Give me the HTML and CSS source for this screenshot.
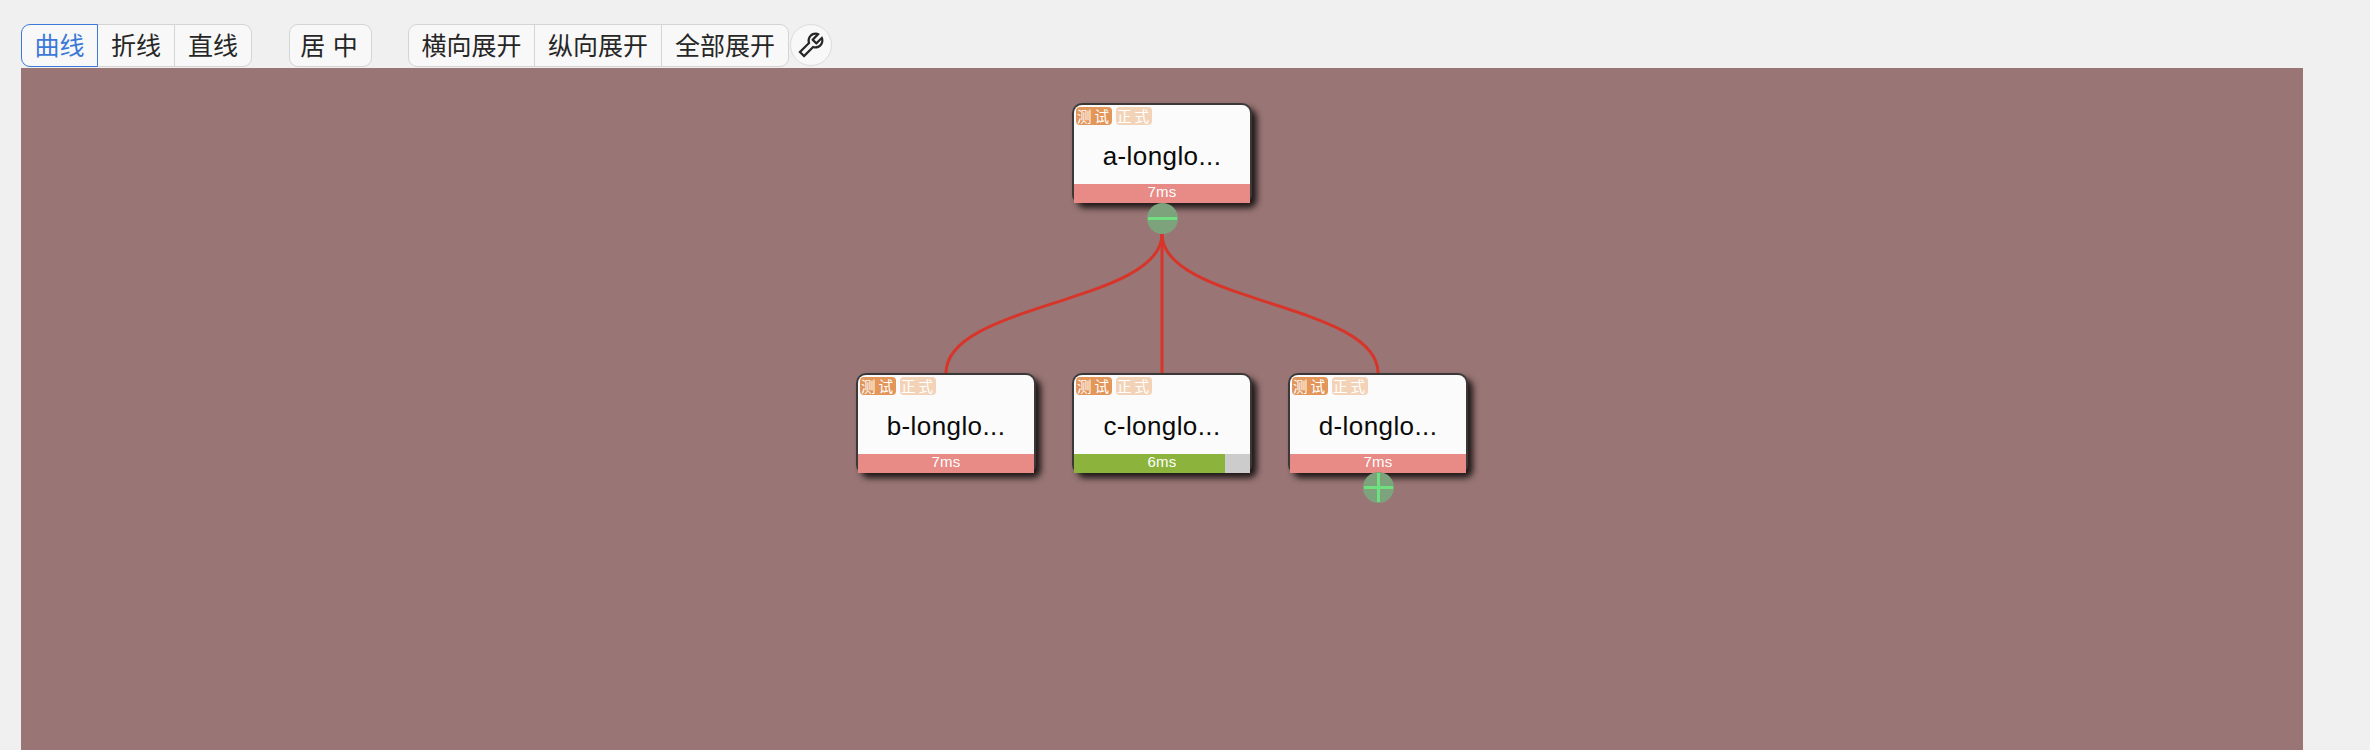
FILE: index.html
```html
<!DOCTYPE html>
<html lang="zh-CN">
<head>
<meta charset="utf-8">
<title>链路图</title>
<link rel="stylesheet" href="styles.css">
</head>
<body>
<div class="toolbar">
  <div class="group">
    <button class="btn selected">曲线</button>
    <button class="btn">折线</button>
    <button class="btn">直线</button>
  </div>
  <div class="group">
    <button class="btn center">居 中</button>
  </div>
  <div class="group last">
    <button class="btn wide">横向展开</button>
    <button class="btn wide">纵向展开</button>
    <button class="btn wide">全部展开</button>
  </div>
  <button class="round" aria-label="工具">
    <svg class="tool" viewBox="0 0 1024 1024"><path d="M876.6 239.5c-.5-.9-1.2-1.8-2-2.5-5-5-13.1-5-18.1 0L684.2 409.3l-67.9-67.9L788.7 169c.8-.8 1.4-1.6 2-2.5 3.6-6.1 1.6-13.9-4.5-17.5-98.2-58-226.8-44.7-311.3 39.7-67 67-89.2 162-66.5 247.4l-293 293c-3 3-2.8 7.9.3 11l169.7 169.7c3.1 3.1 8.1 3.3 11 .3l292.9-292.9c85.5 22.8 180.5.7 247.6-66.4 84.4-84.5 97.7-213.1 39.7-311.3zM786 499.8c-58.1 58.1-145.3 69.3-214.6 33.6l-8.8 8.8-.1-.1-274 274.1-79.2-79.2 230.1-230.1s0 .1.1.1l52.8-52.8c-35.7-69.3-24.5-156.5 33.6-214.6a184.2 184.2 0 01144-53.5L537 318.9a32.05 32.05 0 000 45.3l124.5 124.5a32.05 32.05 0 0045.3 0l132.8-132.8c3.7 51.8-14.4 104.8-53.6 143.9z"/></svg>
  </button>
</div>
<div class="canvas">
  <svg class="edges" width="2282" height="682" viewBox="0 0 2282 682">
    <path d="M1141 166 C1141 235 925 235 925 305"/>
    <path d="M1141 166 L1141 305"/>
    <path d="M1141 166 C1141 235 1357 235 1357 305"/>
  </svg>

  <div class="node node-a">
    <div class="tags"><span class="tag">测试</span><span class="tag pale">正式</span></div>
    <div class="name">a-longlo...</div>
    <div class="bar red"><span class="bar-text">7ms</span></div>
  </div>
  <div class="toggle toggle-a"><span class="h"></span></div>

  <div class="node node-b">
    <div class="tags"><span class="tag">测试</span><span class="tag pale">正式</span></div>
    <div class="name">b-longlo...</div>
    <div class="bar red"><span class="bar-text">7ms</span></div>
  </div>

  <div class="node node-c">
    <div class="tags"><span class="tag">测试</span><span class="tag pale">正式</span></div>
    <div class="name">c-longlo...</div>
    <div class="bar grey"><div class="fill" style="width:86%"></div><span class="bar-text">6ms</span></div>
  </div>

  <div class="node node-d">
    <div class="tags"><span class="tag">测试</span><span class="tag pale">正式</span></div>
    <div class="name">d-longlo...</div>
    <div class="bar red"><span class="bar-text">7ms</span></div>
  </div>
  <div class="toggle toggle-d"><span class="h"></span><span class="v"></span></div>
</div>
</body>
</html>
```
FILE: styles.css
```css
* { box-sizing: border-box; }
html, body { margin: 0; height: 750px; overflow: hidden; }
body {
  background: #f0f0f0;
  padding: 24px 67px 0 21px;
  display: flex;
  flex-direction: column;
  font-family: "Liberation Sans", "Noto Sans CJK SC", sans-serif;
}
.toolbar { display: flex; height: 44px; flex: none; align-items: flex-start; }
.group { display: flex; height: 43px; margin-right: 37px; }
.group.last { margin-right: 0; }
.btn {
  height: 43px;
  margin: 0 0 0 -1px;
  padding: 0 0 2px;
  width: 78px;
  background: #f8f8f8;
  border: 1px solid #d4d4d4;
  color: #262626;
  font: 25px/1 "Noto Sans CJK SC", sans-serif;
  position: relative;
}
.btn:first-child { margin-left: 0; width: 77px; border-radius: 9px 0 0 9px; }
.btn:last-child { border-radius: 0 9px 9px 0; }
.btn:only-child { border-radius: 9px; width: 83px; }
.btn.center { word-spacing: 2px; padding-right: 3px; }
.btn.wide { width: 128px; }
.btn.wide:first-child { width: 127px; }
.btn.selected { color: #3b78d8; border-color: #3b78d8; z-index: 1; }
.group:nth-child(2) { margin-right: 36px; }
.round {
  width: 42px;
  height: 42px;
  margin-left: 1px;
  padding: 0;
  border: 1px solid #dcdcdc;
  border-radius: 50%;
  background: #f8f8f8;
  display: flex;
  align-items: center;
  justify-content: center;
}
.tool { width: 32px; height: 32px; fill: #262626; display: block; flex: none; }

.canvas {
  position: relative;
  flex: 1;
  background: #997575;
  overflow: hidden;
}
.edges { position: absolute; left: 0; top: 0; display: block; }
.edges path { fill: none; stroke: #d8352a; stroke-width: 3; }

.node {
  position: absolute;
  width: 180px;
  height: 100px;
  background: #fbfbfb;
  border: 2px solid #3c3838;
  border-bottom: 0;
  border-radius: 10px 10px 8px 8px;
  box-shadow: 5px 5px 6px rgba(0, 0, 0, 0.8);
  display: flex;
  flex-direction: column;
}
.node-a { left: 1051px; top: 35px; }
.node-b { left: 835px; top: 305px; }
.node-c { left: 1051px; top: 305px; }
.node-d { left: 1267px; top: 305px; }

.tags { display: flex; gap: 4px; padding: 2px 0 0 2px; height: 26px; flex: none; }
.tag {
  width: 36px;
  height: 18px;
  border-radius: 4px;
  background: #e3965a;
  color: #fff;
  font: 14.5px/18px "Noto Sans CJK SC", sans-serif;
  letter-spacing: 3px;
  padding-left: 1px;
  white-space: nowrap;
}
.tag.pale { background: #f3d3b8; }
.name {
  flex: 1;
  text-align: center;
  font-size: 26px;
  line-height: 50px;
  color: #0a0a0a;
  letter-spacing: 0.4px;
}
.bar {
  position: relative;
  flex: none;
  height: 19px;
  text-align: center;
  overflow: hidden;
}
.bar.red { background: #e88a85; }
.bar.grey { background: #cccccc; }
.fill { position: absolute; left: 0; top: 0; bottom: 0; background: #8cb43c; }
.bar-text {
  position: relative;
  color: #fff;
  font-size: 15px;
  line-height: 15px;
  letter-spacing: 0.3px;
  display: block;
}

.toggle {
  position: absolute;
  width: 31px;
  height: 31px;
  border-radius: 50%;
  background: #7ca37c;
}
.toggle-a { left: 1125.5px; top: 135px; }
.toggle-d { left: 1341.5px; top: 404px; }
.toggle .h { position: absolute; left: 1px; right: 1px; top: 14px; height: 3px; background: #6fdf80; }
.toggle .v { position: absolute; top: 1px; bottom: 1px; left: 14px; width: 3px; background: #6fdf80; }
```
